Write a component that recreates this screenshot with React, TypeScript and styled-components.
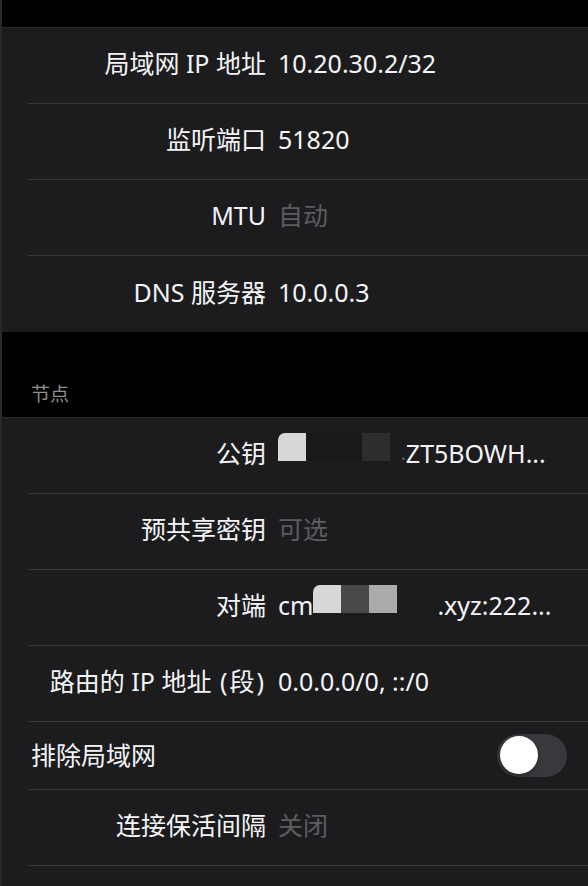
import React from "react";
import styled, { createGlobalStyle } from "styled-components";

const Global = createGlobalStyle`
  html, body { margin: 0; padding: 0; background: #000; overflow: hidden; }
  body { font-family: "Noto Sans", "Noto Sans CJK SC", sans-serif; -webkit-font-smoothing: antialiased; }
  * { box-sizing: border-box; }
`;

const Page = styled.div`
  width: 588px;
  height: 886px;
  background: #000;
  border-left: 2px solid #29292b;
  display: flex;
  flex-direction: column;
  overflow: hidden;
`;

const TopGap = styled.div`
  height: 27px;
  flex: none;
`;

const Group = styled.div`
  background: #1c1c1e;
  border-top: 1px solid #2a2a2c;
  flex: none;
`;

const SectionHeader = styled.div`
  height: 85px;
  display: flex;
  align-items: flex-end;
  padding: 0 0 10px 29px;
  color: #8e8e93;
  font-size: 19px;
  line-height: 25px;
  flex: none;
`;

const Row = styled.div<{ $h?: number }>`
  display: grid;
  grid-template-columns: 238px 1fr;
  column-gap: 12px;
  align-items: center;
  height: ${(p) => p.$h ?? 76}px;
  margin-left: 26px;
  padding-right: 21px;
  padding-bottom: 5px;
  border-bottom: 1px solid #38383a;
  font-size: 25px;
  line-height: 32px;
  color: #f4f4f6;
  &:last-child { border-bottom: none; }
`;

const SwitchRow = styled(Row)`
  display: flex;
  justify-content: space-between;
  padding-left: 3px;
  padding-bottom: 1px;
`;

const Label = styled.div`
  text-align: right;
  white-space: nowrap;
`;

const Paren = styled.span`
  padding: 0 2px;
`;

const Value = styled.div<{ $placeholder?: boolean }>`
  display: flex;
  align-items: center;
  white-space: nowrap;
  overflow: hidden;
  color: ${(p) => (p.$placeholder ? "#5c5c61" : "#f4f4f6")};
`;

const Mosaic = styled.span<{ $c: string; $w: number; $r?: boolean }>`
  display: inline-block;
  width: ${(p) => p.$w}px;
  height: 28px;
  background: ${(p) => p.$c};
  border-top-left-radius: ${(p) => (p.$r ? "7px" : "0")};
  margin-bottom: 12px;
  flex: none;
`;

const Gap = styled.span<{ $w: number }>`
  display: inline-block;
  width: ${(p) => p.$w}px;
  flex: none;
`;

const Faint = styled.span`
  color: #6a6a6e;
  font-size: 18px;
`;

const Toggle = styled.div`
  width: 70px;
  height: 43px;
  border-radius: 22px;
  background: #39393d;
  padding: 2.5px;
  display: flex;
  align-items: center;
`;

const Knob = styled.div`
  width: 38px;
  height: 38px;
  border-radius: 50%;
  background: #fff;
  box-shadow: 0 2px 4px rgba(0, 0, 0, 0.3);
`;

export default function App() {
  return (
    <>
      <Global />
      <Page>
        <TopGap />
        <Group>
          <Row>
            <Label>局域网 IP 地址</Label>
            <Value>10.20.30.2/32</Value>
          </Row>
          <Row>
            <Label>监听端口</Label>
            <Value>51820</Value>
          </Row>
          <Row>
            <Label>MTU</Label>
            <Value $placeholder>自动</Value>
          </Row>
          <Row>
            <Label>DNS 服务器</Label>
            <Value>10.0.0.3</Value>
          </Row>
        </Group>
        <SectionHeader>节点</SectionHeader>
        <Group>
          <Row>
            <Label>公钥</Label>
            <Value>
              <Mosaic $c="#d7d7d7" $w={28} $r />
              <Mosaic $c="#19191a" $w={56} />
              <Mosaic $c="#2d2d2e" $w={28} />
              <Gap $w={11} />
              <Faint>.</Faint>ZT5BOWH...
            </Value>
          </Row>
          <Row>
            <Label>预共享密钥</Label>
            <Value $placeholder>可选</Value>
          </Row>
          <Row>
            <Label>对端</Label>
            <Value>
              cm
              <Mosaic $c="#d8d8d8" $w={28} $r />
              <Mosaic $c="#494949" $w={28} />
              <Mosaic $c="#ababab" $w={28} />
              <Gap $w={40} />
              .xyz:222...
            </Value>
          </Row>
          <Row>
            <Label>
              路由的 IP 地址 <Paren>(</Paren>段<Paren>)</Paren>
            </Label>
            <Value>0.0.0.0/0, ::/0</Value>
          </Row>
          <SwitchRow $h={68}>
            <span>排除局域网</span>
            <Toggle>
              <Knob />
            </Toggle>
          </SwitchRow>
          <Row>
            <Label>连接保活间隔</Label>
            <Value $placeholder>关闭</Value>
          </Row>
          <Row>
            <Label></Label>
            <Value></Value>
          </Row>
        </Group>
      </Page>
    </>
  );
}
